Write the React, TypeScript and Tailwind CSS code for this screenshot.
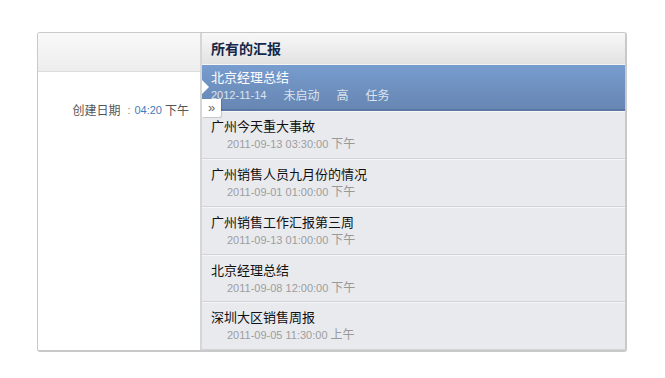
import React from 'react';

const reports = [
  { title: '广州今天重大事故', date: '2011-09-13 03:30:00', ampm: '下午' },
  { title: '广州销售人员九月份的情况', date: '2011-09-01 01:00:00', ampm: '下午' },
  { title: '广州销售工作汇报第三周', date: '2011-09-13 01:00:00', ampm: '下午' },
  { title: '北京经理总结', date: '2011-09-08 12:00:00', ampm: '下午' },
  { title: '深圳大区销售周报', date: '2011-09-05 11:30:00', ampm: '上午' },
];

const cjk = "font-['SimSun','Noto_Sans_CJK_SC',sans-serif]";
const num = "font-['Liberation_Sans',Arial,sans-serif]";

export default function App() {
  return (
    <div className="min-h-screen w-full bg-white pt-[32px] pl-[37px]">
      <div className="relative flex w-[590px] h-[320px] border border-[#c9c9c9] border-b-2 border-r-2 rounded-[3px] overflow-hidden">
        {/* left panel */}
        <div className="flex flex-col w-[164px] shrink-0 bg-white border-r-2 border-[#d6d6d6]">
          <div className="h-[39px] bg-gradient-to-b from-[#f9f9f9] to-[#ededed] border-b border-[#dcdcdc]" />
          <div className="flex justify-end pt-[30px] pr-[11px] text-[12px] leading-[16px]">
            <span className={`${cjk} text-[#555]`}>创建日期</span>
            <span className={`${num} text-[#888] text-[11px] ml-[7px] mr-[4px]`}>:</span>
            <span className={`${num} text-[#3f7dbd] text-[11px]`}>04:20</span>
            <span className={`${cjk} text-[#555] ml-[3px]`}>下午</span>
          </div>
        </div>

        {/* right panel */}
        <div className="flex flex-col flex-1 bg-[#e9eaee]">
          <div className="h-[32px] flex items-center pl-[9px] bg-gradient-to-b from-[#f8f8f8] to-[#e2e2e2] border-b border-[#f4f4f4]">
            <span className={`${cjk} text-[14px] font-bold text-[#15284a]`}>所有的汇报</span>
          </div>

          <div className="h-[47px] flex flex-col pl-[9px] pt-[3px] bg-gradient-to-b from-[#779cce] to-[#6786b3] border-b-2 border-[#5b78a3]">
            <span className={`${cjk} text-[13px] leading-[17px] text-white`}>北京经理总结</span>
            <div className="flex gap-[17px] mt-[2px] text-[#dce4ef] text-[12px] leading-[16px]">
              <span className={`${num} text-[11px]`}>2012-11-14</span>
              <span className={cjk}>未启动</span>
              <span className={cjk}>高</span>
              <span className={cjk}>任务</span>
            </div>
          </div>

          {reports.map((r, i) => (
            <div
              key={i}
              className="h-[48px] flex flex-col pl-[9px] pt-[5px] border-t border-[#f6f6f8] border-b border-b-[#d2d3d7]"
            >
              <span className={`${cjk} text-[13px] leading-[17px] text-[#111]`}>{r.title}</span>
              <div className="flex items-baseline pl-[16px] mt-[1px] leading-[16px]">
                <span className={`${num} text-[11px] text-[#9d9d9d]`}>{r.date}</span>
                <span className={`${cjk} text-[12px] text-[#999] ml-[3px]`}>{r.ampm}</span>
              </div>
            </div>
          ))}
        </div>

        {/* selection pointer */}
        <div className="absolute left-[164px] top-[47px] w-0 h-0 border-y-[7px] border-y-transparent border-l-[7px] border-l-white" />
        <div className="absolute left-[164px] top-[66px] w-[19px] h-[18px] bg-white flex items-center justify-center shadow-[1px_1px_1px_rgba(0,0,0,0.15)] rounded-br-[2px]">
          <span className={`${num} text-[13px] leading-[12px] text-[#666]`}>»</span>
        </div>
      </div>
    </div>
  );
}
